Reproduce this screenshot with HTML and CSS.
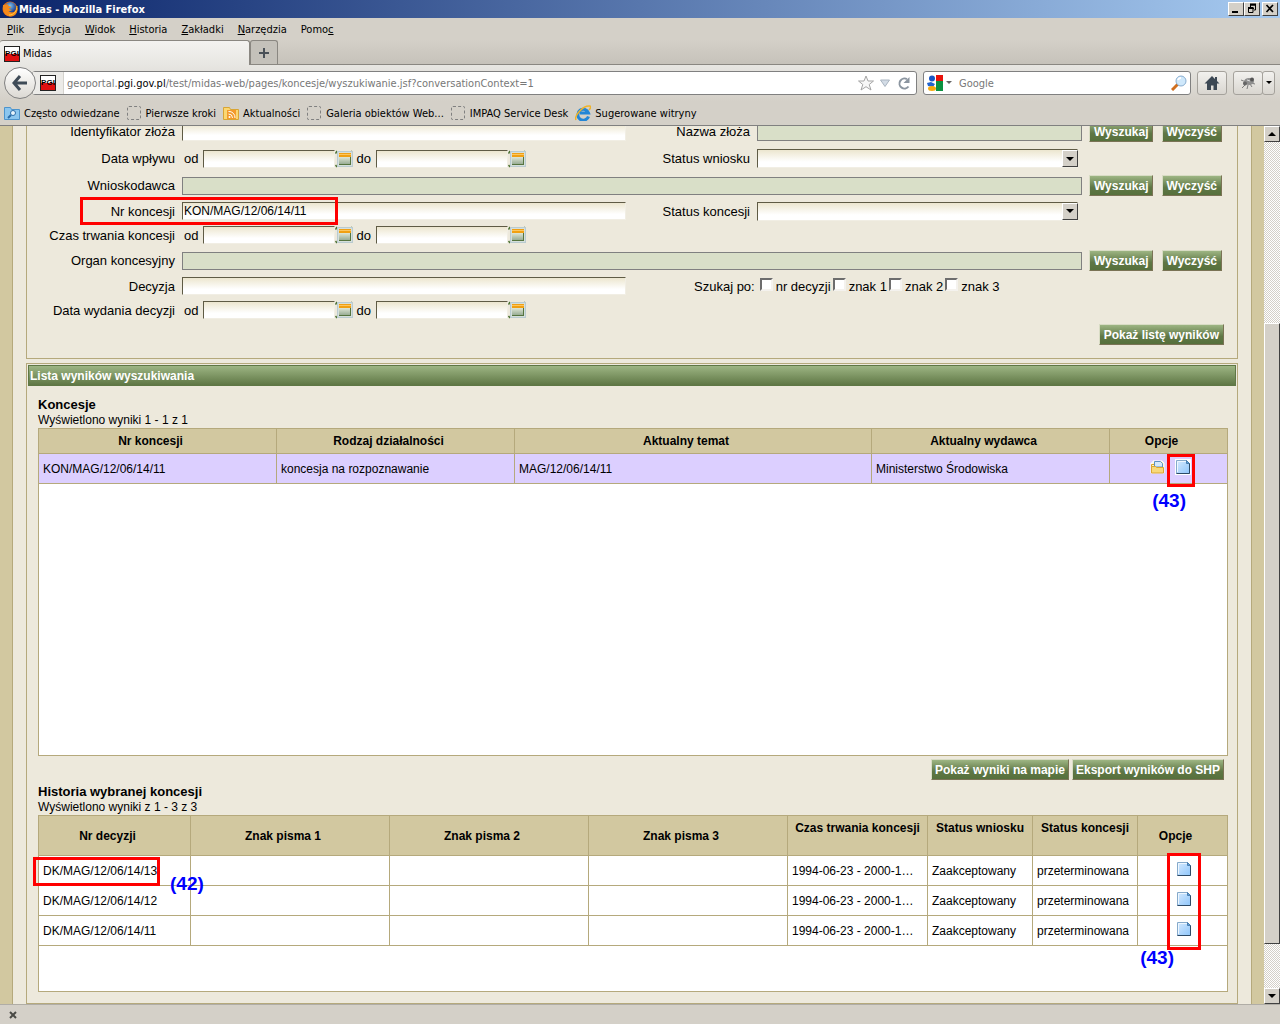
FILE: index.html
```html
<!DOCTYPE html>
<html lang="pl">
<head>
    <meta charset="UTF-8">
    <meta name="viewport" content="width=device-width, initial-scale=1.0">
    <title>Midas</title>
    <link rel="stylesheet" href="styles.css">
</head>
<body>
    <svg class="sprite" aria-hidden="true">
        <defs>
            <linearGradient id="docFill" x1="0" y1="0" x2="1" y2="1">
                <stop offset="0" stop-color="#d6eafe"/>
                <stop offset="1" stop-color="#8fc6fb"/>
            </linearGradient>
            <linearGradient id="calFill" x1="0" y1="0" x2="0" y2="1">
                <stop offset="0" stop-color="#dfe6d6"/>
                <stop offset="1" stop-color="#8fa58c"/>
            </linearGradient>
            <radialGradient id="foxGlobe" cx="0.45" cy="0.35" r="0.6">
                <stop offset="0" stop-color="#7fc4f0"/>
                <stop offset="1" stop-color="#1c3f93"/>
            </radialGradient>
        </defs>
        <symbol id="doc" viewBox="0 0 16 16">
            <path d="M0 0h16v16H0z" fill="#fff"/>
            <path d="M1.500 1.500h10l3 3v10h-13z" fill="url(#docFill)" stroke="#86aacb"/>
            <path d="M2.500 13V2.500H11" fill="none" stroke="#eef7ff"/>
            <path d="M14.500 4v10.500h-13" fill="none" stroke="#2d4a66"/>
            <path d="M11.500 1.500v3h3z" fill="#5fa2dc" stroke="#4a7fb0"/>
        </symbol>
        <symbol id="folder" viewBox="0 0 16 16">
            <path d="M1 14V4h2V2h9l2 2v10z" fill="#fff3c4" stroke="#fff"/>
            <path d="M1.500 13V5.500h3" fill="none" stroke="#d9a62c"/>
            <path d="M4.500 8V2.500h6l2 2V8z" fill="#d5e9fb" stroke="#5c92c2"/>
            <path d="M1.500 14V7.500h4l1 1h7V14z" fill="#f8d97a" stroke="#dba730"/>
        </symbol>
        <symbol id="calendar" viewBox="0 0 19 18">
            <path d="M.5 3.500L2 1M16 1l1.500 2M.5 15L2 17" stroke="#4d7233" stroke-width="1.500"/>
            <rect x="2.500" y="1.500" width="15" height="15" fill="#d5dfdc" stroke="#b9cbd0"/>
            <rect x="4" y="3" width="12" height="4" fill="#f0a013"/>
            <rect x="4" y="4" width="12" height="1" fill="#fdc65f"/>
            <rect x="4" y="7" width="12" height="8" fill="url(#calFill)"/>
            <path d="M4 14.500h12M15.500 7v8" stroke="#55743f" fill="none"/>
        </symbol>
    </svg>

    <header class="chrome">
        <div class="titlebar">
            <svg class="icon" viewBox="0 0 16 16">
                <circle cx="8" cy="8" r="7.500" fill="#e66a10"/>
                <circle cx="8.500" cy="6.500" r="5.500" fill="url(#foxGlobe)"/>
                <path d="M1 4C0 11 4 15.500 9 15.500c4 0 7-4 6.500-9C14 12 9 12.500 6.500 10c1 .3 2.500 0 3.500-1-2-.2-3-1-3-2 1 .2 2-.5 2.500-1C7 5.500 6 4.500 5.500 3 4 4 3 3.500 1 4z" fill="#f58a1c"/>
                <path d="M15 5c0 5-3 9-8 9" stroke="#ffcf3d" fill="none"/>
            </svg>
            <span class="window-title">Midas - Mozilla Firefox</span>
            <div class="window-buttons">
                <button type="button" aria-label="Minimalizuj"><svg viewBox="0 0 14 12"><path d="M3 9h6" stroke="#000" stroke-width="2"/></svg></button>
                <button type="button" aria-label="Przywróć"><svg viewBox="0 0 14 12"><path d="M5 2h6M5.500 2v3M10.500 2v5H9M3 5.500h6" stroke="#000" fill="none"/><path d="M5 1.500h6M3 5h5.500" stroke="#000" stroke-width="2"/><path d="M3.500 5v4.500h4.500V5" stroke="#000" fill="none"/></svg></button>
                <button type="button" class="close" aria-label="Zamknij"><svg viewBox="0 0 14 12"><path d="M3.500 2l6.500 7M10 2L3.500 9" stroke="#000" stroke-width="1.700"/></svg></button>
            </div>
        </div>

        <nav class="menubar">
            <button type="button"><u>P</u>lik</button>
            <button type="button"><u>E</u>dycja</button>
            <button type="button"><u>W</u>idok</button>
            <button type="button"><u>H</u>istoria</button>
            <button type="button"><u>Z</u>akładki</button>
            <button type="button"><u>N</u>arzędzia</button>
            <button type="button">Pomo<u>c</u></button>
        </nav>

        <div class="tabs">
            <button type="button" class="tab"><span class="favicon">PGI</span>Midas</button>
            <button type="button" class="new-tab" aria-label="Nowa karta"><svg viewBox="0 0 12 12"><path d="M6 1v10M1 6h10" stroke="#4a5158" stroke-width="2"/></svg></button>
        </div>

        <div class="navbar">
            <button type="button" class="back" aria-label="Wstecz"><svg viewBox="0 0 18 18"><path d="M9 2L3 9l6 7M3 9h13" stroke="#3f4b57" stroke-width="3" fill="none"/></svg></button>
            <div class="urlbar">
                <span class="site"><span class="favicon">PGI</span></span>
                <div class="url" role="textbox" aria-label="Adres">geoportal.<b>pgi.gov.pl</b>/test/midas-web/pages/koncesje/wyszukiwanie.jsf?conversationContext=1</div>
                <svg class="icon" viewBox="0 0 16 16"><path d="M8 1l2 5h5.500l-4.300 3.500L13 15l-5-3.300L3 15l1.800-5.500L.5 6H6z" fill="#f7f7f7" stroke="#a5a5a5"/></svg>
                <svg class="icon" viewBox="0 0 16 16"><path d="M3.500 5h9L8 11.500z" fill="#d3dce6" stroke="#a9b4c0"/></svg>
                <svg class="icon" viewBox="0 0 16 16"><path d="M12.500 11.500A5 5 0 1 1 11 4.200" stroke="#8b95a0" stroke-width="2" fill="none"/><path d="M13.500 2v6h-6z" fill="#8b95a0"/></svg>
            </div>
            <div class="searchbar">
                <svg class="icon" viewBox="0 0 16 16"><path d="M8 0h8v6H8z" fill="#e8120c"/><path d="M9 6h7v10H9z" fill="#0b9140"/><path d="M0 0h9v16H0z" fill="#fff"/><circle cx="5" cy="3.500" r="3" fill="#1a56c4"/><path d="M0 8l4-1 4 2-2 3-5-1z" fill="#2264cd"/><ellipse cx="5" cy="13.500" rx="4" ry="2.500" fill="#f7aa0d"/></svg>
                <svg class="caret" viewBox="0 0 6 4"><path d="M0 0h6L3 3z" fill="#666"/></svg>
                <input type="search" placeholder="Google" aria-label="Szukaj w Google">
                <svg class="icon" viewBox="0 0 16 16"><path d="M1 15l6-6" stroke="#cf6f20" stroke-width="3"/><circle cx="10" cy="6" r="5" fill="#cfe8fb" stroke="#8aaed0"/><path d="M7 5a3 3 0 0 1 3-2" stroke="#fff" stroke-width="2" fill="none"/></svg>
            </div>
            <button type="button" class="tool" aria-label="Strona startowa"><svg class="icon" viewBox="0 0 16 16"><path d="M8 1L.5 8.500H3V15h4v-4.500h2.500V15H13V8.500h2.500L13 6V2h-2v2z" fill="#3c4854"/></svg></button>
            <div class="tool-group">
                <button type="button" class="tool" aria-label="Firebug"><svg class="icon" viewBox="0 0 16 16"><path d="M1 5l5 2M2 13l4-4M7 14l1-4M12 12l-2-3M15 9l-4-1M3 8h3" stroke="#7d7d7d"/><ellipse cx="9" cy="6.500" rx="5" ry="3.500" fill="#8f8f8f"/><circle cx="12" cy="4.500" r="2" fill="#555"/><circle cx="5" cy="8.500" r="2" fill="#666"/><path d="M7 5l3 1" stroke="#ddd"/></svg></button>
                <button type="button" class="tool more" aria-label="Więcej"><svg class="caret" viewBox="0 0 6 4"><path d="M0 0h6L3 3z"/></svg></button>
            </div>
        </div>

        <nav class="bookmarks">
            <a href="#"><svg class="icon" viewBox="0 0 16 16"><path d="M.5 2.500h6l1 2h8v10H.5z" fill="#8cc6ef" stroke="#4d94cc"/><circle cx="9" cy="8" r="2.500" fill="#e9f5fd" stroke="#2b6ca8"/><path d="M7 10l-3 3" stroke="#2b6ca8" stroke-width="2"/></svg>Często odwiedzane</a>
            <a href="#"><span class="blank"></span>Pierwsze kroki</a>
            <a href="#"><svg class="icon" viewBox="0 0 16 16"><path d="M.5 2.500h6l1 2h8v10H.5z" fill="#fbd772" stroke="#d9a534"/><path d="M4 5h9v9H4z" fill="#f39a2b"/><path d="M5.500 9a4 4 0 0 1 4 4M5.500 6.500a6 6 0 0 1 6.500 6.500" stroke="#fff" fill="none"/><circle cx="6.500" cy="12" r="1" fill="#fff"/></svg>Aktualności</a>
            <a href="#"><span class="blank"></span>Galeria obiektów Web...</a>
            <a href="#"><span class="blank"></span>IMPAQ Service Desk</a>
            <a href="#"><svg class="icon" viewBox="0 0 16 16"><path d="M13.500 11.500A5.500 5.500 0 1 1 13.500 8H5" stroke="#2386d6" stroke-width="3" fill="none"/><path d="M1 15C-1 11 8 0 15 1c1 1 0 3-1 4" stroke="#efb32a" stroke-width="1.500" fill="none"/></svg>Sugerowane witryny</a>
        </nav>
    </header>

    <div class="viewport">
        <main class="page">
            <form class="panel search-form">
                <div class="row tall">
                    <label for="zloze">Identyfikator złoża</label>
                    <input type="text" id="zloze">
                    <label for="nazwa">Nazwa złoża</label>
                    <input type="text" id="nazwa" class="readonly" readonly>
                    <div class="row-buttons">
                        <button type="button" class="btn">Wyszukaj</button>
                        <button type="button" class="btn">Wyczyść</button>
                    </div>
                </div>
                <div class="row tall">
                    <label for="wplyw_od">Data wpływu</label>
                    <div class="dates">
                        <span class="from">od</span>
                        <input type="text" id="wplyw_od">
                        <button type="button" class="cal" aria-label="Kalendarz"><svg><use href="#calendar"/></svg></button>
                        <label for="wplyw_do">do</label>
                        <input type="text" id="wplyw_do">
                        <button type="button" class="cal" aria-label="Kalendarz"><svg><use href="#calendar"/></svg></button>
                    </div>
                    <label for="status_wniosku">Status wniosku</label>
                    <div class="select">
                        <select id="status_wniosku"><option></option></select>
                        <span class="arrow"><svg viewBox="0 0 8 4"><path d="M0 0h8L4 4z"/></svg></span>
                    </div>
                </div>
                <div class="row tall">
                    <label for="wnioskodawca">Wnioskodawca</label>
                    <input type="text" id="wnioskodawca" class="readonly wide" readonly>
                    <div class="row-buttons">
                        <button type="button" class="btn">Wyszukaj</button>
                        <button type="button" class="btn">Wyczyść</button>
                    </div>
                </div>
                <div class="row">
                    <label for="nr_koncesji">Nr koncesji</label>
                    <input type="text" id="nr_koncesji" value="KON/MAG/12/06/14/11">
                    <label for="status_koncesji">Status koncesji</label>
                    <div class="select">
                        <select id="status_koncesji"><option></option></select>
                        <span class="arrow"><svg viewBox="0 0 8 4"><path d="M0 0h8L4 4z"/></svg></span>
                    </div>
                    <span class="frame frame-number"></span>
                </div>
                <div class="row">
                    <label for="czas_od">Czas trwania koncesji</label>
                    <div class="dates">
                        <span class="from">od</span>
                        <input type="text" id="czas_od">
                        <button type="button" class="cal" aria-label="Kalendarz"><svg><use href="#calendar"/></svg></button>
                        <label for="czas_do">do</label>
                        <input type="text" id="czas_do">
                        <button type="button" class="cal" aria-label="Kalendarz"><svg><use href="#calendar"/></svg></button>
                    </div>
                </div>
                <div class="row tall">
                    <label for="organ">Organ koncesyjny</label>
                    <input type="text" id="organ" class="readonly wide" readonly>
                    <div class="row-buttons">
                        <button type="button" class="btn">Wyszukaj</button>
                        <button type="button" class="btn">Wyczyść</button>
                    </div>
                </div>
                <div class="row">
                    <label for="decyzja">Decyzja</label>
                    <input type="text" id="decyzja">
                    <div class="checks">
                        <span>Szukaj po:</span>
                        <label><input type="checkbox">nr decyzji</label>
                        <label><input type="checkbox">znak 1</label>
                        <label><input type="checkbox">znak 2</label>
                        <label><input type="checkbox">znak 3</label>
                    </div>
                </div>
                <div class="row">
                    <label for="wydanie_od">Data wydania decyzji</label>
                    <div class="dates">
                        <span class="from">od</span>
                        <input type="text" id="wydanie_od">
                        <button type="button" class="cal" aria-label="Kalendarz"><svg><use href="#calendar"/></svg></button>
                        <label for="wydanie_do">do</label>
                        <input type="text" id="wydanie_do">
                        <button type="button" class="cal" aria-label="Kalendarz"><svg><use href="#calendar"/></svg></button>
                    </div>
                </div>
                <div class="submit">
                    <button type="button" class="btn">Pokaż listę wyników</button>
                </div>
            </form>

            <section class="panel results">
                <h1>Lista wyników wyszukiwania</h1>
                <div class="results-body">
                    <h2>Koncesje</h2>
                    <p>Wyświetlono wyniki 1 - 1 z 1</p>
                    <div class="table-box box-list">
                        <table>
                            <colgroup>
                                <col class="wide-col"><col class="wide-col"><col><col class="wide-col"><col class="options-col">
                            </colgroup>
                            <thead>
                                <tr>
                                    <th>Nr koncesji</th>
                                    <th>Rodzaj działalności</th>
                                    <th>Aktualny temat</th>
                                    <th>Aktualny wydawca</th>
                                    <th>Opcje</th>
                                </tr>
                            </thead>
                            <tbody>
                                <tr class="selected">
                                    <td>KON/MAG/12/06/14/11</td>
                                    <td>koncesja na rozpoznawanie</td>
                                    <td>MAG/12/06/14/11</td>
                                    <td>Ministerstwo Środowiska</td>
                                    <td>
                                        <div class="icons pair">
                                            <button type="button" aria-label="Otwórz"><svg><use href="#folder"/></svg></button>
                                            <button type="button" aria-label="Szczegóły"><svg><use href="#doc"/></svg></button>
                                        </div>
                                    </td>
                                </tr>
                            </tbody>
                        </table>
                        <span class="frame frame-option"></span>
                        <span class="note note-option">(43)</span>
                    </div>
                    <div class="actions">
                        <button type="button" class="btn">Pokaż wyniki na mapie</button>
                        <button type="button" class="btn">Eksport wyników do SHP</button>
                    </div>

                    <h2>Historia wybranej koncesji</h2>
                    <p>Wyświetlono wyniki z 1 - 3 z 3</p>
                    <div class="table-box box-history">
                        <table>
                            <colgroup>
                                <col class="number"><col><col><col><col class="period"><col class="status"><col class="status"><col class="opts">
                            </colgroup>
                            <thead>
                                <tr>
                                    <th>Nr decyzji</th>
                                    <th>Znak pisma 1</th>
                                    <th>Znak pisma 2</th>
                                    <th>Znak pisma 3</th>
                                    <th class="top">Czas trwania koncesji</th>
                                    <th class="top">Status wniosku</th>
                                    <th class="top">Status koncesji</th>
                                    <th>Opcje</th>
                                </tr>
                            </thead>
                            <tbody>
                                <tr>
                                    <td>DK/MAG/12/06/14/13</td>
                                    <td></td>
                                    <td></td>
                                    <td></td>
                                    <td>1994-06-23 - 2000-1…</td>
                                    <td>Zaakceptowany</td>
                                    <td>przeterminowana</td>
                                    <td><div class="icons"><button type="button" aria-label="Szczegóły"><svg><use href="#doc"/></svg></button></div></td>
                                </tr>
                                <tr>
                                    <td>DK/MAG/12/06/14/12</td>
                                    <td></td>
                                    <td></td>
                                    <td></td>
                                    <td>1994-06-23 - 2000-1…</td>
                                    <td>Zaakceptowany</td>
                                    <td>przeterminowana</td>
                                    <td><div class="icons"><button type="button" aria-label="Szczegóły"><svg><use href="#doc"/></svg></button></div></td>
                                </tr>
                                <tr>
                                    <td>DK/MAG/12/06/14/11</td>
                                    <td></td>
                                    <td></td>
                                    <td></td>
                                    <td>1994-06-23 - 2000-1…</td>
                                    <td>Zaakceptowany</td>
                                    <td>przeterminowana</td>
                                    <td><div class="icons"><button type="button" aria-label="Szczegóły"><svg><use href="#doc"/></svg></button></div></td>
                                </tr>
                            </tbody>
                        </table>
                        <span class="frame frame-decision"></span>
                        <span class="note note-decision">(42)</span>
                        <span class="frame frame-details"></span>
                        <span class="note note-details">(43)</span>
                    </div>
                </div>
            </section>
        </main>

        <div class="scrollbar">
            <button type="button" aria-label="W górę"><svg viewBox="0 0 8 4"><path d="M0 4h8L4 0z"/></svg></button>
            <span class="track-above"></span>
            <span class="thumb"></span>
            <span class="track-below"></span>
            <button type="button" aria-label="W dół"><svg viewBox="0 0 8 4"><path d="M0 0h8L4 4z"/></svg></button>
        </div>
    </div>

    <footer class="addonbar">
        <button type="button" aria-label="Zamknij pasek"><svg viewBox="0 0 8 8"><path d="M1 1l6 6M7 1L1 7" stroke="#4a4a45" stroke-width="2"/></svg></button>
    </footer>
</body>
</html>
```
FILE: styles.css
```css
* {
    box-sizing: border-box;
}

body {
    margin: 0;
    height: 100vh;
    display: flex;
    flex-direction: column;
    overflow: hidden;
    background: #d4d0c8;
    color: #000;
    font-family: "Liberation Sans", Arial, sans-serif;
    font-size: 12px;
}

button {
    margin: 0;
    padding: 0;
    border: none;
    background: none;
    color: inherit;
    font: inherit;
}

.sprite {
    position: absolute;
    width: 0;
    height: 0;
}

.icon {
    flex: none;
    width: 16px;
    height: 16px;
}

.caret {
    flex: none;
    width: 6px;
    height: 4px;
}

/* Browser window */
.chrome {
    flex: none;
    border-bottom: 1px solid #808080;
    font-family: "DejaVu Sans Condensed", "DejaVu Sans", sans-serif;
    font-size: 11px;
}

.titlebar {
    display: flex;
    align-items: center;
    height: 18px;
    padding: 0 2px;
    background: linear-gradient(to right, #0a246a, #a6caf0);
    color: #fff;
    font-weight: bold;
}

.window-title {
    flex: 1;
    padding-left: 1px;
}

.window-buttons {
    display: flex;
}

.window-buttons button {
    width: 16px;
    height: 14px;
    background: #d4d0c8;
    border: 1px solid;
    border-color: #fff #404040 #404040 #fff;
}

.window-buttons svg {
    display: block;
}

.window-buttons .close {
    margin-left: 2px;
}

.menubar {
    display: flex;
    align-items: center;
    gap: 14px;
    height: 22px;
    padding: 0 7px;
}

.tabs {
    display: flex;
    height: 25px;
    background: linear-gradient(#d4d0c8, #c6c2ba);
    border-bottom: 1px solid #8a8781;
}

.tab {
    display: flex;
    align-items: center;
    gap: 3px;
    width: 250px;
    height: 25px;
    padding: 1px 4px 0;
    background: linear-gradient(#f3f2f0, #e7e6e2);
    border: 1px solid #8a8781;
    border-width: 1px 1px 0 0;
    border-radius: 3px 3px 0 0;
}

.favicon {
    width: 16px;
    height: 16px;
    border: 1px solid #222;
    background: linear-gradient(#fff 50%, #e01010 50%);
    color: #000;
    font: bold 8px/14px "Liberation Sans", sans-serif;
    text-align: center;
}

.new-tab {
    width: 28px;
    height: 24px;
    background: #c4c1ba;
    border: 1px solid #8a8781;
    border-bottom: none;
    border-radius: 3px 3px 0 0;
}

.new-tab svg {
    width: 12px;
    height: 12px;
    vertical-align: middle;
}

.navbar {
    display: flex;
    align-items: center;
    gap: 6px;
    height: 36px;
    padding: 0 5px 0 4px;
    background: linear-gradient(#e7e6e2, #d4d0c8);
}

.back {
    display: flex;
    align-items: center;
    justify-content: center;
    flex: none;
    width: 32px;
    height: 32px;
    margin-right: -10px;
    z-index: 1;
    background: linear-gradient(#fff, #dcd9d3);
    border: 1px solid #808080;
    border-radius: 50%;
}

.back svg {
    width: 18px;
    height: 18px;
}

.urlbar,
.searchbar {
    display: flex;
    align-items: center;
    gap: 3px;
    height: 24px;
    background: #fff;
    border: 1px solid #808080;
    border-radius: 3px;
    color: #777;
}

.urlbar {
    flex: 1;
    min-width: 0;
    padding-right: 4px;
}

.site {
    display: flex;
    align-items: center;
    justify-content: flex-end;
    width: 31px;
    height: 22px;
    padding-right: 7px;
    background: #ecebe8;
    border-right: 1px solid #d4d2cd;
}

.url {
    flex: 1;
    overflow: hidden;
    white-space: nowrap;
}

.url b {
    color: #000;
    font-weight: normal;
}

.searchbar {
    width: 268px;
    padding: 0 3px;
}

.searchbar input {
    flex: 1;
    min-width: 0;
    margin-left: 4px;
    padding: 0;
    border: none;
    outline: none;
    background: none;
    font: inherit;
}

.searchbar input::placeholder {
    color: #777;
}

.tool {
    display: flex;
    align-items: center;
    justify-content: center;
    width: 30px;
    height: 24px;
    background: linear-gradient(#f2f1ee, #d9d6d0);
    border: 1px solid #a5a29c;
    border-radius: 3px;
}

.tool-group {
    display: flex;
}

.more {
    width: 13px;
    margin-left: -1px;
}

.bookmarks {
    display: flex;
    align-items: center;
    gap: 7px;
    height: 24px;
    padding: 0 4px;
}

.bookmarks a {
    display: flex;
    align-items: center;
    gap: 4px;
    color: #000;
    text-decoration: none;
    white-space: nowrap;
}

.blank {
    width: 14px;
    height: 14px;
    margin-right: 1px;
    border: 1px dashed #808080;
    border-radius: 2px;
}

/* Page is scrolled, so the top of the form is cut off */
.viewport {
    flex: 1;
    min-height: 0;
    display: flex;
    overflow: hidden;
    background: #d2c8a0;
}

.page {
    flex: 1;
    min-width: 0;
    display: flex;
    flex-direction: column;
    justify-content: flex-end;
    gap: 4px;
    margin: 0 12px;
    padding: 0 13px;
    background: #ede9dc;
    border: 1px solid #b5a97c;
    border-width: 0 1px;
}

.panel {
    flex: none;
    border: 1px solid #b5a97c;
}

/* Search form */
.search-form {
    padding: 0 15px 13px 0;
}

.row {
    position: relative;
    display: grid;
    grid-template-columns: 148px 1fr 117px 325px 133px;
    column-gap: 7px;
    align-items: center;
    height: 24px;
}

.row.tall {
    height: 27px;
}

.row label,
.row span {
    font-size: 13px;
}

.row > label {
    text-align: right;
    white-space: nowrap;
}

input[type="text"] {
    width: 100%;
    min-width: 0;
    height: 18px;
    padding: 0 1px;
    border: 1px solid;
    border-color: #5f5b45 #f1eee4 #f1eee4 #5f5b45;
    border-radius: 0;
    background: linear-gradient(#ece6cf, #fff 70%);
    font: 12px "Liberation Sans", Arial, sans-serif;
}

input[type="text"].readonly {
    border-color: #808080;
    background: #d9dfc8;
}

input.wide {
    grid-column: 2 / 5;
}

.row-buttons {
    grid-column: 5;
    display: flex;
    justify-content: space-between;
}

.btn {
    height: 21px;
    padding: 0 3px;
    border: 1px solid;
    border-color: #d8dcc4 #7a7355 #7a7355 #d8dcc4;
    background: linear-gradient(#9db583, #5f7745 60%, #56703c);
    color: #fff;
    font-weight: bold;
    white-space: nowrap;
}

.search-form .btn {
    padding: 0 4px;
}

.dates {
    display: flex;
    align-items: center;
}

.dates .from {
    padding: 0 5px 0 2px;
}

.dates label {
    padding: 0 5px 0 2px;
}

.dates input[type="text"] {
    width: 132px;
}

.cal svg {
    display: block;
    width: 19px;
    height: 18px;
}

.select {
    width: 321px;
    position: relative;
}

.select select {
    display: block;
    width: 100%;
    height: 19px;
    border: 1px solid;
    border-color: #5f5b45 #f1eee4 #f1eee4 #5f5b45;
    border-radius: 0;
    appearance: none;
    background: linear-gradient(#ece6cf, #fff 70%);
}

/* arrow lies over the select */
.select .arrow {
    position: absolute;
    top: 1px;
    right: 0;
    display: flex;
    align-items: center;
    justify-content: center;
    width: 16px;
    height: 17px;
    border: 1px solid;
    border-color: #fff #404040 #404040 #fff;
    background: #d4d0c8;
    pointer-events: none;
}

.arrow svg {
    width: 8px;
    height: 4px;
}

.checks {
    grid-column: 3 / 5;
    display: flex;
    align-items: center;
    padding-left: 61px;
    white-space: nowrap;
}

.checks span {
    margin-right: 5px;
}

.checks label {
    display: flex;
    align-items: center;
    gap: 3px;
    margin-right: 2px;
}

.checks input {
    appearance: none;
    width: 13px;
    height: 13px;
    margin: 0 0 3px;
    border: 2px solid;
    border-color: #6d6d6d #f4f2ee #f4f2ee #6d6d6d;
    background: #fff;
}

.submit {
    display: flex;
    justify-content: flex-end;
    margin-right: -2px;
    padding-top: 2px;
}

/* Results */
.results {
    padding: 1px 1px 11px;
}

.results h1 {
    height: 21px;
    margin: 0;
    padding: 0 1px;
    border: 1px solid #5f7745;
    background: linear-gradient(#9db583, #5f7745);
    color: #fff;
    font-size: 12px;
    line-height: 20px;
}

.results-body {
    padding: 10px 8px 0 10px;
}

.results-body h2 {
    margin: 0;
    font-size: 13px;
    line-height: 17px;
}

.results-body p {
    margin: 0;
    line-height: 15px;
}

.table-box {
    position: relative;
    background: #fff;
    border: 1px solid #b5a97c;
}

.box-list {
    height: 328px;
}

.box-history {
    height: 177px;
}

table {
    width: 100%;
    table-layout: fixed;
    border-collapse: separate;
    border-spacing: 0;
}

th,
td {
    padding: 0 4px;
    border: 1px solid #b5a97c;
    border-width: 0 1px 1px 0;
    white-space: nowrap;
}

th:last-child,
td:last-child {
    border-right: none;
}

th {
    height: 25px;
    padding-right: 18px;
    background: #d2c8a0;
}

td {
    height: 30px;
    overflow: hidden;
}

.wide-col {
    width: 238px;
}

.options-col {
    width: 117px;
}

.box-history th {
    height: 40px;
}

.number {
    width: 152px;
}

.period {
    width: 140px;
}

.status {
    width: 105px;
}

.opts {
    width: 89px;
}

.box-history th.top {
    padding: 5px 0 0;
    vertical-align: top;
}

.selected td {
    background: #dccfff;
}

.icons {
    display: flex;
    justify-content: center;
    gap: 9px;
    padding: 0 0 3px 3px;
}

.icons svg {
    display: block;
    width: 16px;
    height: 16px;
}

.actions {
    display: flex;
    justify-content: flex-end;
    gap: 3px;
    padding: 3px 4px;
}

/* Manual annotations over the page */
.frame {
    position: absolute;
    border: 3px solid #f00;
    pointer-events: none;
}

.note {
    position: absolute;
    color: #00f;
    font-size: 19px;
    line-height: 22px;
    font-weight: bold;
}

.frame-number {
    top: -2px;
    left: 53px;
    width: 258px;
    height: 28px;
}

.frame-option {
    top: 25px;
    right: 32px;
    width: 28px;
    height: 33px;
}

.note-option {
    top: 61px;
    right: 41px;
}

.frame-decision {
    top: 41px;
    left: -6px;
    width: 127px;
    height: 29px;
}

.note-decision {
    top: 57px;
    left: 131px;
}

.frame-details {
    top: 37px;
    right: 26px;
    width: 34px;
    height: 97px;
}

.note-details {
    top: 131px;
    right: 53px;
}

/* Scrollbar and bottom bar */
.scrollbar {
    flex: none;
    display: flex;
    flex-direction: column;
    width: 16px;
    background: repeating-conic-gradient(#fff 0 25%, #d4d0c8 0 50%) 0 0 / 2px 2px;
}

.scrollbar button,
.thumb {
    background: #d4d0c8;
    border: 1px solid;
    border-color: #fff #404040 #404040 #fff;
}

.scrollbar button {
    display: flex;
    align-items: center;
    justify-content: center;
    height: 16px;
}

.scrollbar svg {
    width: 8px;
    height: 4px;
}

.track-above {
    flex: 181;
}

.thumb {
    flex: 621;
}

.track-below {
    flex: 44;
}

.addonbar {
    flex: none;
    display: flex;
    align-items: center;
    height: 20px;
    padding-left: 9px;
    border-top: 1px solid #b0ada6;
}

.addonbar svg {
    display: block;
    width: 8px;
    height: 8px;
}
```
